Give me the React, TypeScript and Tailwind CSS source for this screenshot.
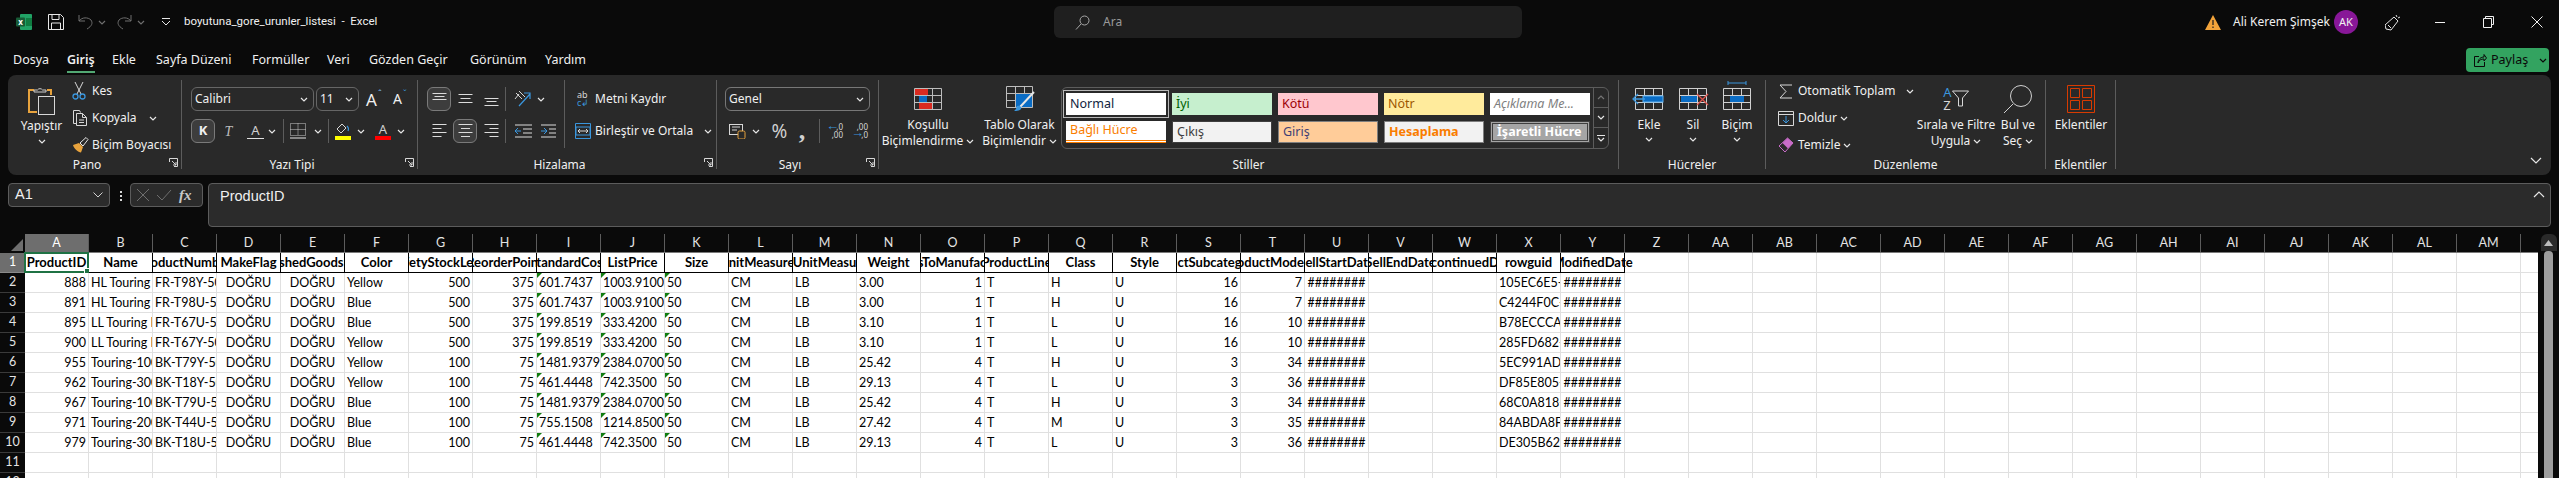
import type { ReactNode } from 'react';

const UI = 'text-[#f0f0f0]';
const LINE = 'bg-[#5c5c5c]';

const TABS = [
  { label: 'Dosya', w: 'w-[54px]' },
  { label: 'Giriş', w: 'w-[45px]', active: true },
  { label: 'Ekle', w: 'w-[44px]' },
  { label: 'Sayfa Düzeni', w: 'w-[96px]' },
  { label: 'Formüller', w: 'w-[75px]' },
  { label: 'Veri', w: 'w-[42px]' },
  { label: 'Gözden Geçir', w: 'w-[101px]' },
  { label: 'Görünüm', w: 'w-[75px]' },
  { label: 'Yardım', w: 'w-[60px]' },
];

const HEADERS = [
  'ProductID', 'Name', 'ProductNumber', 'MakeFlag', 'FinishedGoodsFlag', 'Color', 'SafetyStockLevel', 'ReorderPoint',
  'StandardCost', 'ListPrice', 'Size', 'SizeUnitMeasureCode', 'WeightUnitMeasureCode', 'Weight', 'DaysToManufacture',
  'ProductLine', 'Class', 'Style', 'ProductSubcategoryID', 'ProductModelID', 'SellStartDate', 'SellEndDate',
  'DiscontinuedDate', 'rowguid', 'ModifiedDate',
];

const ALIGN = ['r', 'l', 'l', 'c', 'c', 'l', 'r', 'r', 'l', 'l', 'l', 'l', 'l', 'l', 'r', 'l', 'l', 'l', 'r', 'r', 'c', 'l', 'l', 'l', 'c'];

const H = '########';
const ROWS = [
  ['888', 'HL Touring Frame', 'FR-T98Y-50', 'DOĞRU', 'DOĞRU', 'Yellow', '500', '375', '601.7437', '1003.9100', '50', 'CM', 'LB', '3.00', '1', 'T', 'H', 'U', '16', '7', H, '', '', '105EC6E5-', H],
  ['891', 'HL Touring Frame', 'FR-T98U-50', 'DOĞRU', 'DOĞRU', 'Blue', '500', '375', '601.7437', '1003.9100', '50', 'CM', 'LB', '3.00', '1', 'T', 'H', 'U', '16', '7', H, '', '', 'C4244F0C-', H],
  ['895', 'LL Touring Frame', 'FR-T67U-50', 'DOĞRU', 'DOĞRU', 'Blue', '500', '375', '199.8519', '333.4200', '50', 'CM', 'LB', '3.10', '1', 'T', 'L', 'U', '16', '10', H, '', '', 'B78ECCCA', H],
  ['900', 'LL Touring Frame', 'FR-T67Y-50', 'DOĞRU', 'DOĞRU', 'Yellow', '500', '375', '199.8519', '333.4200', '50', 'CM', 'LB', '3.10', '1', 'T', 'L', 'U', '16', '10', H, '', '', '285FD682-', H],
  ['955', 'Touring-1000', 'BK-T79Y-50', 'DOĞRU', 'DOĞRU', 'Yellow', '100', '75', '1481.9379', '2384.0700', '50', 'CM', 'LB', '25.42', '4', 'T', 'H', 'U', '3', '34', H, '', '', '5EC991AD', H],
  ['962', 'Touring-3000', 'BK-T18Y-50', 'DOĞRU', 'DOĞRU', 'Yellow', '100', '75', '461.4448', '742.3500', '50', 'CM', 'LB', '29.13', '4', 'T', 'L', 'U', '3', '36', H, '', '', 'DF85E805-', H],
  ['967', 'Touring-1000', 'BK-T79U-50', 'DOĞRU', 'DOĞRU', 'Blue', '100', '75', '1481.9379', '2384.0700', '50', 'CM', 'LB', '25.42', '4', 'T', 'H', 'U', '3', '34', H, '', '', '68C0A818-', H],
  ['971', 'Touring-2000', 'BK-T44U-50', 'DOĞRU', 'DOĞRU', 'Blue', '100', '75', '755.1508', '1214.8500', '50', 'CM', 'LB', '27.42', '4', 'T', 'M', 'U', '3', '35', H, '', '', '84ABDA8F', H],
  ['979', 'Touring-3000', 'BK-T18U-50', 'DOĞRU', 'DOĞRU', 'Blue', '100', '75', '461.4448', '742.3500', '50', 'CM', 'LB', '29.13', '4', 'T', 'L', 'U', '3', '36', H, '', '', 'DE305B62-', H],
];

const COLS = [
  ...'ABCDEFGHIJKLMNOPQRSTUVWXYZ'.split(''),
  ...'ABCDEFGHIJKLM'.split('').map((c) => 'A' + c),
];

const STYLES = [
  { t: 'Normal', c: 'bg-white text-[#10243e]' },
  { t: 'İyi', c: 'bg-[#c6efce] text-[#006100]' },
  { t: 'Kötü', c: 'bg-[#ffc7ce] text-[#9c0006]' },
  { t: 'Nötr', c: 'bg-[#ffeb9c] text-[#9c5700]' },
  { t: 'Açıklama Me...', c: 'bg-white text-[#7f7f7f] italic' },
  { t: 'Bağlı Hücre', c: 'bg-white text-[#fa7d00] border-b-[3px] border-double border-[#fa7d00]' },
  { t: 'Çıkış', c: 'bg-[#f2f2f2] text-[#3f3f3f] border border-[#3f3f3f]' },
  { t: 'Giriş', c: 'bg-[#ffcc99] text-[#3f3f76] border border-[#7f7f7f]' },
  { t: 'Hesaplama', c: 'bg-[#f2f2f2] text-[#fa7d00] font-bold border border-[#7f7f7f]' },
  { t: 'İşaretli Hücre', c: 'bg-[#a5a5a5] text-white font-bold border-[3px] border-double border-[#3f3f3f]' },
];

function Chev({ className = '' }: { className?: string }) {
  return (
    <svg width="8" height="5" viewBox="0 0 8 5" className={`shrink-0 text-[#e6e6e6] ${className}`}>
      <path d="M1 1l3 3 3-3" fill="none" stroke="currentColor" strokeWidth="1.2" />
    </svg>
  );
}

function Lines({ ys, align = 'l' }: { ys: number[]; align?: 'l' | 'c' | 'r' }) {
  return (
    <svg width="15" height="16" viewBox="0 0 15 16">
      {ys.map((y, i) => {
        const w = i % 2 === 0 ? 14 : 9;
        const x = align === 'l' ? 0.5 : align === 'r' ? 14.5 - w : 7.5 - w / 2;
        return <rect key={y} x={x} y={y} width={w} height="1" fill="#dcdcdc" />;
      })}
    </svg>
  );
}

function TopLines({ ys }: { ys: number[] }) {
  return (
    <svg width="15" height="16" viewBox="0 0 15 16">
      {ys.map((y, i) => (
        <rect key={y} x={i === 1 ? 2.5 : 0.5} y={y} width={i === 1 ? 10 : 14} height="1" fill="#dcdcdc" />
      ))}
    </svg>
  );
}

function Launcher() {
  return (
    <svg width="9" height="9" viewBox="0 0 9 9" className="absolute right-[3px] bottom-[2px]">
      <path d="M0.5 4V0.5H8.5V8.5H5M3 3l4 4M7 4v3H4" fill="none" stroke="#d8d8d8" strokeWidth="1" />
    </svg>
  );
}

function Group({ w, label, launcher, children }: { w: string; label: string; launcher?: boolean; children: ReactNode }) {
  return (
    <div className={`relative mt-[5px] flex h-[89px] shrink-0 flex-col border-r border-[#5c5c5c] ${w}`}>
      <div className="flex min-h-0 flex-1">{children}</div>
      <div className={`-mb-[5px] h-[18px] text-center text-[12px] leading-[18px] ${launcher ? 'pr-[15px]' : ''}`}>{label}</div>
      {launcher && <Launcher />}
    </div>
  );
}

function BigButton({ w, icon, lines, chev }: { w: string; icon: ReactNode; lines: ReactNode[]; chev?: boolean }) {
  return (
    <div className={`flex shrink-0 flex-col items-center ${w}`}>
      <div className="flex h-[37px] items-center justify-center">{icon}</div>
      {lines.map((l, i) => (
        <div key={i} className="flex h-[16px] items-center gap-[3px] whitespace-nowrap text-[12px] leading-[16px]">
          {l}
        </div>
      ))}
      {chev && <Chev className="mt-[4px]" />}
    </div>
  );
}

function SmallRow({ icon, label, chevGap }: { icon: ReactNode; label: string; chevGap?: string }) {
  return (
    <div className="flex h-[22px] items-center whitespace-nowrap text-[12px]">
      <span className="flex w-[20px] shrink-0 items-center">{icon}</span>
      <span>{label}</span>
      {chevGap && <Chev className={chevGap} />}
    </div>
  );
}

function GridIcon({ children }: { children?: ReactNode }) {
  return (
    <svg width="34" height="24" viewBox="0 0 34 24" className="overflow-visible">
      <path d="M3.5 1.5h27v21h-27zM3.5 8.5h27M3.5 15.5h27M12.5 1.5v21M21.500 1.5v21" fill="none" stroke="#d0d0d0" strokeWidth="1" />
      {children}
    </svg>
  );
}

function Ribbon() {
  return (
    <div className="mx-2 flex h-[100px] shrink-0 rounded-lg bg-[#292929]">
      <Group w="w-[174px]" label="Pano" launcher>
        <div className="ml-[3px] flex w-[61px] flex-col items-center">
          <div className="flex h-[36px] items-end">
            <svg width="28" height="30" viewBox="0 0 28 30">
              <path d="M6 4H1v22h8" fill="none" stroke="#e8a33d" strokeWidth="2" />
              <path d="M19 4h4v5" fill="none" stroke="#e8a33d" strokeWidth="2" />
              <path d="M6 6V4h3.5a3 3 0 0 1 5 0H18v2z" fill="none" stroke="#cfcfcf" />
              <rect x="10.5" y="10.5" width="16" height="18" fill="#2b2b2b" stroke="#d8d8d8" />
            </svg>
          </div>
          <div className="mt-[2px] h-[16px] text-[12px] leading-[16px]">Yapıştır</div>
          <Chev className="mt-[5px]" />
        </div>
        <div className="flex flex-col gap-[5px]">
          <SmallRow
            label="Kes"
            icon={
              <svg width="14" height="18" viewBox="0 0 14 18">
                <path d="M3 0l6 12M11 0L5 12" stroke="#d8d8d8" fill="none" />
                <circle cx="3.5" cy="14.5" r="2.5" fill="none" stroke="#3a96dd" strokeWidth="1.3" />
                <circle cx="10.5" cy="14.5" r="2.5" fill="none" stroke="#3a96dd" strokeWidth="1.3" />
              </svg>
            }
          />
          <SmallRow
            label="Kopyala"
            chevGap="ml-[12px]"
            icon={
              <svg width="16" height="16" viewBox="0 0 16 16">
                <path d="M4.5 13.5h-3V.5h6l1 2" fill="none" stroke="#d8d8d8" />
                <path d="M4.5 3.5h6l4 4v8h-10zM10.5 3.5v4h4M7 10h5M7 12.5h5" fill="none" stroke="#d8d8d8" />
              </svg>
            }
          />
          <SmallRow
            label="Biçim Boyacısı"
            icon={
              <svg width="17" height="16" viewBox="0 0 17 16">
                <path d="M1 8l6-2 4 4-2 5.5C6 15 2 12 1 8z" fill="#e8a33d" />
                <path d="M8 6l6-5.5 2 2L11 9z" fill="none" stroke="#e6e6e6" />
              </svg>
            }
          />
        </div>
      </Group>

      <Group w="w-[236px]" label="Yazı Tipi" launcher>
        <div className="flex flex-col gap-[8px] pl-[9px] pt-[7px]">
          <div className="flex h-[24px] items-center">
            <div className="flex h-[24px] w-[123px] items-center justify-between rounded-md border border-[#666] pl-[3px] pr-[5px] text-[12px]">
              Calibri
              <Chev />
            </div>
            <div className="ml-[2px] flex h-[24px] w-[43px] items-center justify-between rounded-md border border-[#666] pl-[3px] pr-[5px] text-[12px]">
              11
              <Chev />
            </div>
            <span className="relative ml-[7px] w-[27px] text-[17px] leading-none">
              A<span className="absolute top-[-2px] left-[12px] text-[9px] text-[#7fb8e6]">ˆ</span>
            </span>
            <span className="relative w-[20px] text-[14px] leading-none">
              A<span className="absolute top-[-3px] left-[10px] text-[9px] text-[#3a96dd]">ˇ</span>
            </span>
          </div>
          <div className="flex h-[24px] items-center">
            <div className="flex h-[24px] w-[24px] items-center justify-center rounded-md border border-[#7a7a7a] bg-[#3d3d3d] text-[13px] font-bold">K</div>
            <span className="w-[27px] text-center font-['Liberation_Serif',serif] text-[14px] italic text-[#bcbcbc]">T</span>
            <span className="ml-[5px] w-[17px] border-b border-[#e0e0e0] text-center text-[13px] leading-[15px] text-[#d0d0d0]">A</span>
            <Chev className="ml-[4px]" />
            <span className={`ml-[7px] h-[24px] w-px ${LINE}`} />
            <svg width="16" height="16" viewBox="0 0 16 16" className="ml-[6px]">
              <path d="M.5.5h15v12H.5zM8 .5v12M.5 6.5h15" fill="none" stroke="#cfcfcf" strokeDasharray="1 1" />
              <rect y="14.5" width="16" height="1" fill="#e8e8e8" />
            </svg>
            <Chev className="ml-[8px]" />
            <span className={`ml-[6px] h-[24px] w-px ${LINE}`} />
            <div className="ml-[6px] flex w-[16px] flex-col items-center">
              <svg width="14" height="12" viewBox="0 0 14 12">
                <path d="M6 1L1 6l4 4 5-5z" fill="none" stroke="#d8d8d8" />
                <path d="M11 3c1 1 2 3 1 5" fill="none" stroke="#3a96dd" strokeWidth="1.2" />
              </svg>
              <span className="mt-[1px] h-[4px] w-[16px] bg-[#ffff00]" />
            </div>
            <Chev className="ml-[6px]" />
            <div className="ml-[10px] flex w-[16px] flex-col items-center">
              <span className="h-[12px] text-[13px] leading-[12px] text-[#d0d0d0]">A</span>
              <span className="mt-[1px] h-[4px] w-[16px] bg-[#ff0000]" />
            </div>
            <Chev className="ml-[6px]" />
          </div>
        </div>
      </Group>

      <Group w="w-[299px]" label="Hizalama" launcher>
        <div className="mb-[4px] flex h-[68px] w-[147px] shrink-0 flex-col gap-[8px] border-r border-[#5c5c5c] pl-[9px] pt-[7px]">
          <div className="flex h-[24px] items-center gap-[2px]">
            <div className="flex h-[24px] w-[24px] items-center justify-center rounded-md border border-[#7a7a7a] bg-[#3d3d3d]">
              <TopLines ys={[2, 5, 8]} />
            </div>
            <div className="flex w-[24px] justify-center"><TopLines ys={[3, 7, 11]} /></div>
            <div className="flex w-[24px] justify-center"><TopLines ys={[7, 10, 14]} /></div>
            <span className={`h-[24px] w-px ${LINE}`} />
            <svg width="18" height="18" viewBox="0 0 18 18" className="ml-[6px]">
              <path d="M2 3l6 6M5 1l6 6M1 9l4-5" stroke="#d8d8d8" fill="none" />
              <path d="M5 16L16 4M10 3h6v6" stroke="#3a96dd" fill="none" strokeWidth="1.2" />
            </svg>
            <Chev className="ml-[3px]" />
          </div>
          <div className="flex h-[24px] items-center gap-[2px]">
            <div className="flex w-[24px] justify-center"><Lines ys={[1, 5, 9, 13]} /></div>
            <div className="flex h-[24px] w-[24px] items-center justify-center rounded-md border border-[#7a7a7a] bg-[#3d3d3d]">
              <Lines ys={[1, 5, 9, 13]} align="c" />
            </div>
            <div className="flex w-[24px] justify-center"><Lines ys={[1, 5, 9, 13]} align="r" /></div>
            <span className={`h-[24px] w-px ${LINE}`} />
            <svg width="17" height="14" viewBox="0 0 17 14" className="ml-[7px]">
              <path d="M0 1h17M8 5h9M8 9h9M0 13h17" stroke="#dcdcdc" />
              <path d="M6 7H0M3 4L0 7l3 3" stroke="#3a96dd" fill="none" />
            </svg>
            <svg width="15" height="14" viewBox="0 0 15 14" className="ml-[7px]">
              <path d="M0 1h15M8 5h7M8 9h7M0 13h15" stroke="#dcdcdc" />
              <path d="M0 7h6M3 4l3 3-3 3" stroke="#3a96dd" fill="none" />
            </svg>
          </div>
        </div>
        <div className="flex flex-col gap-[8px] pl-[10px] pt-[7px] text-[12px]">
          <div className="flex h-[24px] items-center whitespace-nowrap">
            <span className="ml-[2px] w-[18px] text-[9px] leading-[8px] text-[#d8d8d8]">ab<br /><span className="text-[#3a96dd]">c↲</span></span>
            Metni Kaydır
          </div>
          <div className="flex h-[24px] items-center whitespace-nowrap">
            <svg width="16" height="16" viewBox="0 0 16 16" className="mr-[4px]">
              <path d="M.5.5h15v15H.5z" fill="none" stroke="#3a96dd" />
              <rect x="1" y="4" width="14" height="8" fill="#292929" stroke="#3a96dd" />
              <path d="M3 8h10M5 6L3 8l2 2M11 6l2 2-2 2" stroke="#d8d8d8" fill="none" />
            </svg>
            Birleştir ve Ortala
            <Chev className="ml-[11px]" />
          </div>
        </div>
      </Group>

      <Group w="w-[162px]" label="Sayı" launcher>
        <div className="flex flex-col gap-[8px] pl-[8px] pt-[7px]">
          <div className="flex h-[24px] w-[145px] items-center justify-between rounded-md border border-[#777] pl-[3px] pr-[5px] text-[12px]">
            Genel
            <Chev />
          </div>
          <div className="flex h-[24px] items-center">
            <svg width="17" height="15" viewBox="0 0 17 15" className="ml-[4px]">
              <rect x=".5" y=".5" width="13" height="10" fill="none" stroke="#d8d8d8" />
              <path d="M3 3h8M3 6h5" stroke="#d8d8d8" />
              <rect x="9" y="7" width="7" height="8" rx="1.5" fill="#292929" stroke="#e8a33d" />
            </svg>
            <Chev className="ml-[6px]" />
            <span className="ml-[11px] w-[17px] text-center text-[19px] leading-none text-[#d0d0d0]">%</span>
            <span className="ml-[6px] w-[16px] text-center font-['Liberation_Serif',serif] text-[26px] font-bold leading-[14px] text-[#d0d0d0]">,</span>
            <span className={`ml-[9px] h-[24px] w-px ${LINE}`} />
            <span className="relative ml-[6px] w-[17px] text-[8px] leading-[8px] text-right text-[#d8d8d8]">
              ,0<br />,00
              <span className="absolute left-0 top-[-2px] text-[13px] text-[#3a96dd]">←</span>
            </span>
            <span className="relative ml-[8px] w-[17px] text-[8px] leading-[8px] text-right text-[#d8d8d8]">
              ,00<br />,0
              <span className="absolute left-0 top-[5px] text-[13px] text-[#3a96dd]">→</span>
            </span>
          </div>
        </div>
      </Group>

      <Group w="w-[740px]" label="Stiller">
        <BigButton
          w="ml-[10px] w-[78px]"
          icon={
            <svg width="28" height="22" viewBox="0 0 28 22">
              <path d="M.5.5h27v21H.5zM.5 7.5h27M.5 14.5h27M9.5.5v21M18.5.5v21" fill="none" stroke="#bdbdbd" />
              <rect x="1" y="1" width="13" height="6" fill="#d92a20" />
              <rect x="5" y="8" width="8" height="6" fill="#0a6cc4" />
              <rect x="5" y="15" width="13" height="6" fill="#d92a20" />
            </svg>
          }
          lines={['Koşullu', <>Biçimlendirme<Chev /></>]}
        />
        <BigButton
          w="ml-[14px] w-[77px]"
          icon={
            <svg width="30" height="26" viewBox="0 0 30 26">
              <path d="M1.5.5h26v21h-26zM1.5 7.5h26M1.5 14.5h26M10.5.5v21M19.5.5v21" fill="none" stroke="#bdbdbd" />
              <rect x="11" y="8" width="16" height="13" fill="#0a6cc4" />
              <path d="M29 6L15 21" stroke="#e6e6e6" strokeWidth="2" />
              <path d="M12 20c3-1 5 1 4 3-2 2-5 2-7 2 2-1 2-3 3-5z" fill="#3a96dd" />
            </svg>
          }
          lines={['Tablo Olarak', <>Biçimlendir<Chev /></>]}
        />
        <div className="ml-[3px] mt-[7px] flex h-[62px] w-[548px] rounded-md border border-[#5c5c5c] pl-[4px]">
          <div className="mt-[5px] grid h-[50px] w-[524px] grid-cols-[100px_100px_100px_100px_100px] grid-rows-[22px_22px] gap-x-[6px] gap-y-[6px]">
            {STYLES.map((s, i) => (
              <div
                key={s.t}
                className={`flex items-center overflow-hidden whitespace-nowrap pl-[4px] text-[12.5px] ${s.c} ${i === 0 ? 'outline outline-[1px] outline-offset-[2px] outline-[#b8b8b8]' : ''}`}
              >
                {s.t}
              </div>
            ))}
          </div>
          <div className="ml-auto flex w-[15px] flex-col border-l border-[#5c5c5c]">
            <div className="flex h-[20px] items-center justify-center border-b border-[#5c5c5c]"><Chev className="rotate-180 opacity-40" /></div>
            <div className="flex h-[20px] items-center justify-center border-b border-[#5c5c5c]"><Chev /></div>
            <div className="flex flex-1 flex-col items-center justify-center gap-[1px]">
              <span className="h-px w-[8px] bg-[#e6e6e6]" />
              <Chev />
            </div>
          </div>
        </div>
      </Group>

      <Group w="w-[147px]" label="Hücreler">
        <BigButton
          w="ml-[8px] w-[44px]"
          chev
          lines={['Ekle']}
          icon={
            <GridIcon>
              <rect x="11" y="9" width="20" height="6" fill="#0a6cc4" stroke="#5fb0ee" />
              <path d="M13 12H1M6 7l-5 5 5 5" fill="none" stroke="#3a96dd" strokeWidth="1.3" />
            </GridIcon>
          }
        />
        <BigButton
          w="w-[44px]"
          chev
          lines={['Sil']}
          icon={
            <GridIcon>
              <rect x="5" y="9" width="16" height="6" fill="#0a6cc4" />
              <path d="M21 7l11 11M32 7L21 18" stroke="#e0524a" strokeWidth="1.3" />
            </GridIcon>
          }
        />
        <BigButton
          w="w-[44px]"
          chev
          lines={['Biçim']}
          icon={
            <GridIcon>
              <rect x="10" y="9" width="14" height="6" fill="#0a6cc4" />
              <path d="M8 -4h18M8 -6v4M26 -6v4" stroke="#3a96dd" />
            </GridIcon>
          }
        />
      </Group>

      <Group w="w-[280px]" label="Düzenleme">
        <div className="flex w-[152px] shrink-0 flex-col gap-[5px] pl-[12px]">
          <SmallRow
            label="Otomatik Toplam"
            chevGap="ml-[11px]"
            icon={
              <svg width="15" height="15" viewBox="0 0 15 15">
                <path d="M14 1H2l6 6.5L2 14h12" fill="none" stroke="#d8d8d8" />
              </svg>
            }
          />
          <SmallRow
            label="Doldur"
            chevGap="ml-[3px]"
            icon={
              <svg width="16" height="15" viewBox="0 0 16 15">
                <path d="M.5.5h15v14H.5zM.5 3.5h15" fill="none" stroke="#d8d8d8" />
                <path d="M8 5v7M5 9l3 3 3-3" fill="none" stroke="#3a96dd" />
              </svg>
            }
          />
          <SmallRow
            label="Temizle"
            chevGap="ml-[3px]"
            icon={
              <svg width="16" height="16" viewBox="0 0 16 16">
                <path d="M9.5 1L15 6l-8 9-6-6z" fill="none" stroke="#c86cc8" />
                <path d="M9.5 1L15 6l-5 5.5-5.5-5.5z" fill="#c86cc8" />
              </svg>
            }
          />
        </div>
        <BigButton
          w="w-[76px]"
          icon={
            <span className="flex items-center">
              <span className="text-[13px] leading-[13px]">
                <span className="text-[#3a96dd]">A</span>
                <br />
                <span className="text-[#d8d8d8]">Z</span>
              </span>
              <svg width="17" height="17" viewBox="0 0 17 17">
                <path d="M.5 1h16l-6 7v8h-4V8z" fill="none" stroke="#d8d8d8" />
              </svg>
            </span>
          }
          lines={['Sırala ve Filtre', <>Uygula<Chev /></>]}
        />
        <BigButton
          w="ml-[2px] w-[44px]"
          icon={
            <svg width="30" height="30" viewBox="0 0 30 30" className="mt-[1px]">
              <circle cx="18" cy="12" r="10.5" fill="none" stroke="#d0d0d0" />
              <path d="M10 20L1 29" stroke="#d0d0d0" />
            </svg>
          }
          lines={['Bul ve', <>Seç<Chev /></>]}
        />
      </Group>

      <Group w="w-[70px]" label="Eklentiler">
        <BigButton
          w="w-[70px]"
          icon={
            <svg width="28" height="28" viewBox="0 0 28 28" className="mt-[1px]">
              <path d="M.5.5h27v27H.5z" fill="none" stroke="#d83b01" />
              <path d="M3.5 3.5h9v9h-9zM15.5 3.5h9v9h-9zM3.5 15.5h9v9h-9zM15.5 15.5h9v9h-9z" fill="none" stroke="#d83b01" />
            </svg>
          }
          lines={['Eklentiler']}
        />
      </Group>

      <div className="ml-auto mr-[9px] flex items-end pb-[11px]">
        <svg width="12" height="7" viewBox="0 0 12 7"><path d="M1 1l5 5 5-5" fill="none" stroke="#e6e6e6" strokeWidth="1.2" /></svg>
      </div>
    </div>
  );
}

function Cell({ header, value, index }: { header?: string; value?: string; index: number }) {
  if (header) {
    return (
      <div
        className={`relative flex w-[64px] shrink-0 justify-center whitespace-nowrap border-b border-r border-black text-[13px] font-bold leading-[19px] ${index === 24 ? '[clip-path:inset(0_-40px_0_0)]' : index === 0 ? '' : 'overflow-hidden'}`}
      >
        <span className="shrink-0">{header}</span>
        {index === 0 && (
          <span className="absolute -inset-px border-2 border-[#1f7244]">
            <span className="absolute -bottom-[3px] -right-[3px] h-[6px] w-[6px] border border-white bg-[#1f7244]" />
          </span>
        )}
      </div>
    );
  }
  const a = ALIGN[index];
  const warn = value && index >= 8 && index <= 10;
  return (
    <div
      className={`relative flex w-[64px] shrink-0 overflow-hidden whitespace-nowrap border-b border-r border-[#e0e0e0] px-[2px] leading-[19px] ${a === 'r' ? 'justify-end' : a === 'c' ? 'justify-center' : 'justify-start'}`}
    >
      {warn && <span className="absolute left-0 top-0 h-0 w-0 border-r-[5px] border-t-[5px] border-r-transparent border-t-[#107c10]" />}
      <span className="shrink-0">{value}</span>
    </div>
  );
}

function Sheet() {
  const rowNums = Array.from({ length: 12 }, (_, i) => i + 1);
  return (
    <div className="mt-[7px] flex min-h-0 flex-1 overflow-hidden">
      {/* row headers */}
      <div className="flex w-[25px] shrink-0 flex-col">
        <div className="flex h-[19px] shrink-0 items-end justify-end pb-[2px] pr-[2px]">
          <svg width="12" height="12" viewBox="0 0 12 12"><path d="M12 0v12H0z" fill="#6e6e6e" /></svg>
        </div>
        {rowNums.map((n) => (
          <div
            key={n}
            className={`flex h-[20px] shrink-0 items-center justify-center border-b font-['Lato',sans-serif] text-[12.5px] ${n === 1 ? 'border-[#8a8a8a] bg-[#6e6e6e] text-white' : 'border-[#3a3a3a] text-[#e4e4e4]'}`}
          >
            {n}
          </div>
        ))}
      </div>

      <div className="min-w-0 flex-1">
        {/* column headers */}
        <div className="flex h-[19px] border-b border-[#7a7a7a]">
          {COLS.map((c, i) => (
            <div
              key={c}
              className={`flex w-[64px] shrink-0 items-center justify-center border-r border-[#5c5c5c] font-['Lato',sans-serif] text-[12.5px] ${i === 0 ? 'bg-[#6e6e6e] text-white' : 'text-[#e4e4e4]'}`}
            >
              {c}
            </div>
          ))}
        </div>

        {/* cells */}
        <div className="bg-white font-['Lato',sans-serif] text-[12.5px] text-black">
          <div className="flex h-[20px]">
            {COLS.map((_, i) => (
              <Cell key={i} header={HEADERS[i]} index={i} />
            ))}
            <span className="w-[17px] shrink-0 border-b border-[#e0e0e0]" />
          </div>
          {rowNums.slice(1).map((n) => (
            <div key={n} className="flex h-[20px]">
              {COLS.map((_, i) => (
                <Cell key={i} value={ROWS[n - 2]?.[i]} index={i} />
              ))}
              <span className="w-[17px] shrink-0 border-b border-[#e0e0e0]" />
            </div>
          ))}
        </div>
      </div>

      {/* vertical scrollbar */}
      <div className="flex w-[21px] shrink-0 flex-col items-center">
        <div className="flex h-[17px] w-[16px] shrink-0 items-center justify-center rounded-t-md bg-[#2a2a2a]">
          <svg width="9" height="6" viewBox="0 0 9 6"><path d="M4.5 0L9 6H0z" fill="#bcbcbc" /></svg>
        </div>
        <div className="w-[9px] flex-1 rounded-t-[4px] bg-[#9e9e9e]" />
      </div>
    </div>
  );
}

export default function App() {
  return (
    <div className={`relative flex h-[478px] w-[2559px] flex-col overflow-hidden bg-[#0a0a0a] font-['Noto_Sans',sans-serif] ${UI}`}>
      {/* title bar */}
      <div className="flex h-[44px] shrink-0 items-center text-[12px]">
        <svg width="16" height="16" viewBox="0 0 16 16" className="ml-[16px]">
          <rect x="4" width="12" height="16" rx="1" fill="#21a366" />
          <rect x="10" y="4" width="6" height="8" fill="#107c41" />
          <rect y="3.5" width="9" height="9" rx="1" fill="#185c37" />
          <text x="4.5" y="11" fontSize="8" fontWeight="700" textAnchor="middle" fill="#fff">x</text>
        </svg>
        <svg width="16" height="16" viewBox="0 0 16 16" className="ml-[16px]">
          <path d="M.5.5h12l3 3v12H.5zM4 .5v5h7v-5M3.5 15.5V9h9v6.5" fill="none" stroke="#e8e8e8" />
        </svg>
        <svg width="15" height="16" viewBox="0 0 15 16" className="ml-[14px]">
          <path d="M1 1v6h6M1 7c3-4 9-4 12-1 2 3 1 6-4 9" fill="none" stroke="#6e6e6e" />
        </svg>
        <Chev className="ml-[5px] !text-[#6e6e6e]" />
        <svg width="15" height="16" viewBox="0 0 15 16" className="ml-[11px]">
          <path d="M14 1v6H8M14 7c-3-4-9-4-12-1-2 3-1 6 4 9" fill="none" stroke="#6e6e6e" />
        </svg>
        <Chev className="ml-[5px] !text-[#6e6e6e]" />
        <svg width="10" height="8" viewBox="0 0 10 8" className="ml-[16px]">
          <path d="M1 .5h8M1 3l4 4 4-4" fill="none" stroke="#e6e6e6" />
        </svg>
        <span className="ml-[13px] w-[200px] shrink-0 whitespace-pre font-['Roboto',sans-serif] text-[11.5px]">boyutuna_gore_urunler_listesi  -  Excel</span>

        <div className="ml-[670px] flex h-[32px] w-[468px] shrink-0 items-center rounded-md bg-[#1f1f1f] text-[#9a9a9a]">
          <svg width="15" height="15" viewBox="0 0 15 15" className="ml-[21px]">
            <circle cx="9.5" cy="5.5" r="4.5" fill="none" stroke="#a8a8a8" />
            <path d="M6 9l-5 5.5" stroke="#a8a8a8" />
          </svg>
          <span className="ml-[13px]">Ara</span>
        </div>

        <div className="ml-auto flex items-center">
          <svg width="16" height="15" viewBox="0 0 16 15">
            <path d="M8 0l8 15H0z" fill="#f2a33a" />
            <path d="M8 5v5M8 11.5v1.5" stroke="#1a1a1a" strokeWidth="1.2" />
          </svg>
          <span className="ml-[12px] w-[92px] whitespace-nowrap">Ali Kerem Şimşek</span>
          <span className="ml-[9px] flex h-[24px] w-[24px] items-center justify-center rounded-full bg-[#881798] text-[11px]">AK</span>
          <svg width="16" height="17" viewBox="0 0 16 17" className="ml-[27px]">
            <path d="M9 3l4 4-7 9-5-1-1-4zM3 11l3 3M11 1l1 2M15 3l-2 1" fill="none" stroke="#e6e6e6" />
          </svg>
          <span className="ml-[34px] h-px w-[10px] bg-[#f0f0f0]" />
          <svg width="11" height="12" viewBox="0 0 11 12" className="ml-[38px]">
            <path d="M.5 2.5h8v9h-8zM2.5 2.5v-2h8v8H8.5" fill="none" stroke="#f0f0f0" />
          </svg>
          <svg width="12" height="12" viewBox="0 0 12 12" className="ml-[37px] mr-[16px]">
            <path d="M.5.5l11 11M11.5.5l-11 11" stroke="#f0f0f0" />
          </svg>
        </div>
      </div>

      {/* tabs */}
      <div className="flex h-[31px] shrink-0 pl-[13px] text-[12.5px]">
        {TABS.map((t) => (
          <div key={t.label} className={`shrink-0 pt-[6px] leading-[20px] ${t.w}`}>
            <span className={`relative inline-block whitespace-nowrap ${t.active ? 'font-semibold' : ''}`}>
              {t.label}
              {t.active && <span className="absolute -bottom-[3px] left-0 right-0 h-[2px] bg-[#52a873]" />}
            </span>
          </div>
        ))}
        <div className="ml-auto mr-[10px] mt-[4px] flex h-[24px] w-[83px] items-center rounded-[4px] bg-[#33a360] text-[12.5px] text-[#0a0a0a]">
          <svg width="13" height="13" viewBox="0 0 13 13" className="ml-[8px]">
            <path d="M5 2.5H.5v10h10V8M4 9c0-4 3-6 6-6V.5L12.5 4 10 7V5C7 5 5 6 4 9z" fill="none" stroke="#0a0a0a" />
          </svg>
          <span className="ml-[4px]">Paylaş</span>
          <Chev className="ml-[11px] !text-[#0a0a0a]" />
        </div>
      </div>

      <Ribbon />

      {/* formula bar */}
      <div className="mx-2 mt-[8px] flex h-[44px] shrink-0 items-start font-['Liberation_Sans',sans-serif]">
        <div className="flex h-[24px] w-[102px] shrink-0 items-center justify-between rounded-[4px] border border-[#5c5c5c] bg-[#2b2b2b] pl-[6px] pr-[6px] text-[14.5px]">
          A1
          <svg width="10" height="6" viewBox="0 0 10 6"><path d="M.5.5L5 5 9.5.5" fill="none" stroke="#d0d0d0" /></svg>
        </div>
        <div className="ml-[10px] mt-[8px] flex w-[2px] flex-col gap-[2px]">
          <span className="h-[2px] bg-[#d8d8d8]" />
          <span className="h-[2px] bg-[#d8d8d8]" />
          <span className="h-[2px] bg-[#d8d8d8]" />
        </div>
        <div className="ml-[8px] flex h-[24px] w-[73px] shrink-0 items-center rounded-[4px] border border-[#5c5c5c] bg-[#2b2b2b]">
          <svg width="12" height="12" viewBox="0 0 12 12" className="ml-[6px]"><path d="M0 0l12 12M12 0L0 12" stroke="#6e6e6e" /></svg>
          <svg width="15" height="12" viewBox="0 0 15 12" className="ml-[8px]"><path d="M0 6l5 5 9-10" fill="none" stroke="#6e6e6e" /></svg>
          <span className="ml-[7px] font-['Liberation_Serif',serif] text-[15px] font-bold italic text-[#c8c8c8]">fx</span>
        </div>
        <div className="ml-[5px] h-[44px] flex-1 rounded-[4px] border border-[#5c5c5c] bg-[#2b2b2b] pl-[11px] pt-[2px] text-[14.5px] leading-[20px]">
          <div className="flex justify-between pr-[5px]">
            ProductID
            <svg width="12" height="7" viewBox="0 0 12 7" className="mt-[5px]"><path d="M1 6l5-5 5 5" fill="none" stroke="#e6e6e6" strokeWidth="1.2" /></svg>
          </div>
        </div>
      </div>

      <Sheet />
    </div>
  );
}
